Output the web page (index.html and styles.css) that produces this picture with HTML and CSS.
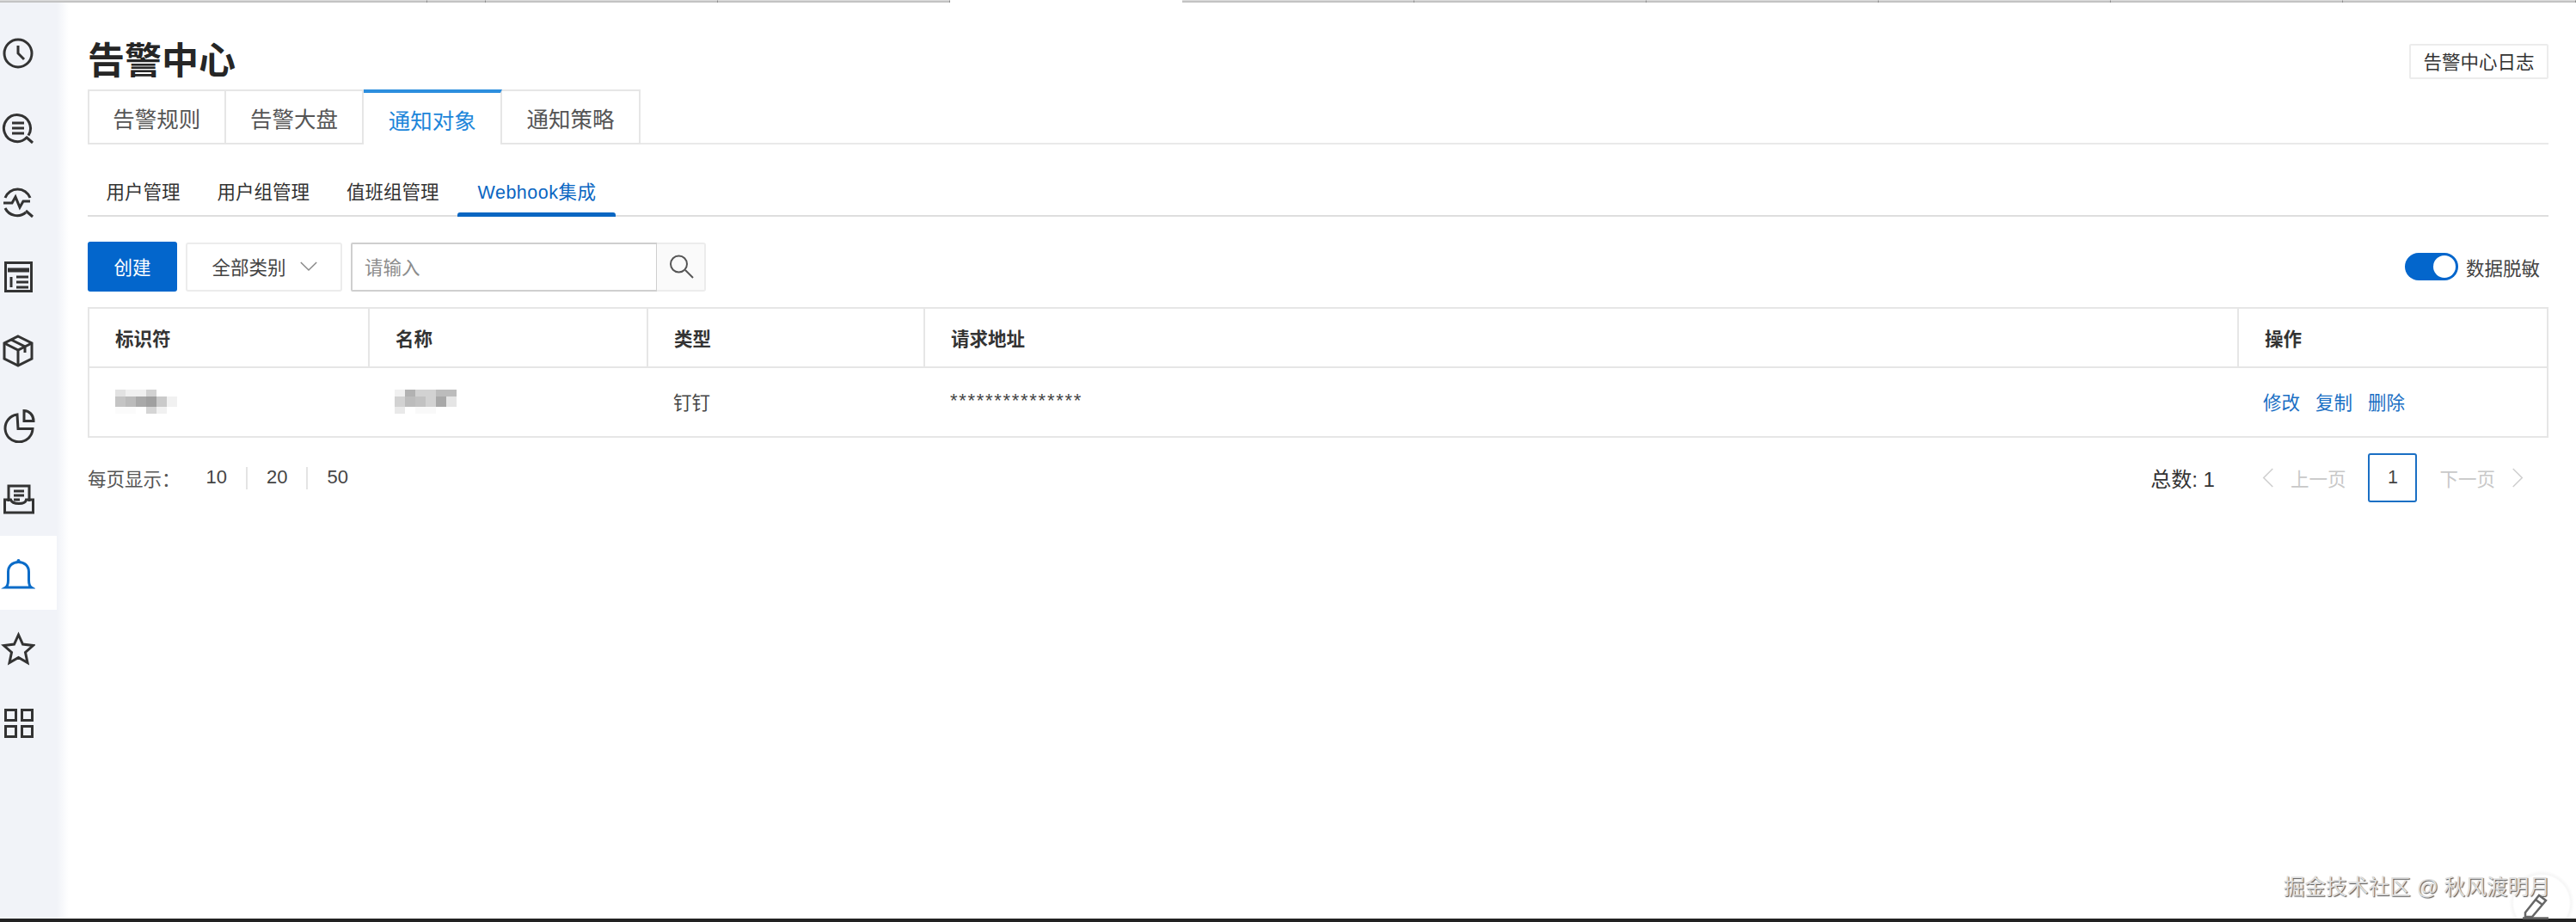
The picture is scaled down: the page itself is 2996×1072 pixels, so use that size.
FILE: index.html
```html
<!DOCTYPE html>
<html lang="zh-CN">
<head>
<meta charset="utf-8">
<title>告警中心</title>
<link rel="stylesheet" href="styles.css">
</head>
<body>
<div class="page">
  <div class="browser-strip">
    <i></i><i></i><i></i><i></i><i class="gap"></i><i></i><i></i><i></i><i></i><i></i><i></i>
  </div>
  <div class="shell">
    <nav class="rail">
      <a class="rail-item">
        <svg viewBox="0 0 40 40" class="rail-icon"><circle cx="20" cy="20" r="16"/><path d="M20 11v9l7 7"/></svg>
      </a>
      <a class="rail-item">
        <svg viewBox="0 0 40 40" class="rail-icon"><path d="M30 31A15.500 15.500 0 1 1 32 28.500"/><path d="M13 14h14M13 20h14M13 26h14"/><path d="M29 30l8 7"/></svg>
      </a>
      <a class="rail-item">
        <svg viewBox="0 0 40 40" class="rail-icon"><path d="M5 15A15.500 15.500 0 0 1 34 15"/><path d="M5 27A15.500 15.500 0 0 0 29 32"/><path d="M3 21h10l4-7 5 12 4-7h8"/><path d="M29 30l8 7"/></svg>
      </a>
      <a class="rail-item">
        <svg viewBox="0 0 40 40" class="rail-icon"><rect x="5.500" y="3.500" width="30" height="33"/><path class="thick" d="M8 12h25"/><path d="M12 20v12M18 20h14M18 26h14M18 32h14"/></svg>
      </a>
      <a class="rail-item">
        <svg viewBox="0 0 40 40" class="rail-icon"><path d="M20 3l16 8v18l-16 8-16-8V11z"/><path d="M4 11l16 8 16-8M20 19v18M12 7l16 8v7"/></svg>
      </a>
      <a class="rail-item">
        <svg viewBox="0 0 40 40" class="rail-icon"><path d="M19 7A16 16 0 1 0 37 23.500H20z"/><path d="M27 2.500c6 0 11 5 11 12H27z"/></svg>
      </a>
      <a class="rail-item">
        <svg viewBox="0 0 40 40" class="rail-icon"><path d="M9 22V4h24v18"/><path d="M15 10h12M15 15h12M15 20h7"/><path d="M4.500 20v15h33V20h-8c-1 6-16 6-18 0z"/></svg>
      </a>
      <a class="rail-item is-active">
        <svg viewBox="0 0 40 40" class="rail-icon"><path d="M5.500 35c2.500-1.500 3-4.500 3-8.500V17c0-7 5-11.500 12-11.500S32.500 10 32.500 17v9.500c0 4 .5 7 3 8.500z"/><circle class="dot" cx="20.500" cy="4" r="2"/></svg>
      </a>
      <a class="rail-item">
        <svg viewBox="0 0 40 40" class="rail-icon"><path d="M20.500 4l5 11 12 1.500-9 8 2.500 12-10.500-6-10.500 6 2.500-12-9-8 12-1.500z"/></svg>
      </a>
      <a class="rail-item">
        <svg viewBox="0 0 40 40" class="rail-icon"><rect x="5.500" y="4.500" width="12" height="12"/><rect x="24.500" y="4.500" width="12" height="12"/><rect x="5.500" y="23.500" width="12" height="12"/><rect x="24.500" y="23.500" width="12" height="12"/></svg>
      </a>
    </nav>
    <main class="content">
      <header class="title-row">
        <h1 class="title">告警中心</h1>
        <button class="log-btn">告警中心日志</button>
      </header>
      <div class="tabs">
        <a class="tab">告警规则</a>
        <a class="tab">告警大盘</a>
        <a class="tab is-active">通知对象</a>
        <a class="tab">通知策略</a>
      </div>
      <div class="subtabs">
        <a class="subtab">用户管理</a>
        <a class="subtab">用户组管理</a>
        <a class="subtab">值班组管理</a>
        <a class="subtab is-active">Webhook集成</a>
      </div>
      <div class="toolbar">
        <button class="create-btn">创建</button>
        <div class="select">全部类别
          <svg viewBox="0 0 24 14" class="select-arrow"><path d="M2 2l10 10L22 2"/></svg>
        </div>
        <div class="search">
          <div class="search-input">请输入</div>
          <div class="search-btn">
            <svg viewBox="0 0 32 32" class="search-icon"><circle cx="13.500" cy="13" r="9.500"/><path d="M21 20l9 9"/></svg>
          </div>
        </div>
        <div class="mask-toggle">
          <span class="switch"><span class="knob"></span></span>
          <span>数据脱敏</span>
        </div>
      </div>
      <table class="grid">
        <colgroup>
          <col class="c1"><col class="c2"><col class="c3"><col class="c4"><col class="c5">
        </colgroup>
        <thead>
          <tr><th>标识符</th><th>名称</th><th>类型</th><th>请求地址</th><th>操作</th></tr>
        </thead>
        <tbody>
          <tr>
            <td>
              <svg class="mosaic" viewBox="0 0 72 28" shape-rendering="crispEdges">
                <rect x="0" width="12" height="8" fill="#e2e2e2"/><rect x="12" width="24" height="8" fill="#f0f0f0"/><rect x="36" width="12" height="8" fill="#d2d2d2"/>
                <rect x="0" y="8" width="12" height="12" fill="#c4c4c4"/><rect x="12" y="8" width="12" height="12" fill="#bbb"/><rect x="24" y="8" width="12" height="12" fill="#a9a9a9"/><rect x="36" y="8" width="12" height="12" fill="#a0a0a0"/><rect x="48" y="8" width="12" height="12" fill="#cacaca"/><rect x="60" y="8" width="12" height="12" fill="#f1f1f1"/>
                <rect x="0" y="20" width="24" height="8" fill="#fbfbfb"/><rect x="36" y="20" width="12" height="8" fill="#d5d5d5"/><rect x="48" y="20" width="12" height="8" fill="#f1f1f1"/>
              </svg>
            </td>
            <td>
              <svg class="mosaic" viewBox="0 0 72 28" shape-rendering="crispEdges">
                <rect x="0" width="12" height="8" fill="#f0f0f0"/><rect x="12" width="12" height="8" fill="#b2b2b2"/><rect x="24" width="24" height="8" fill="#d2d2d2"/><rect x="48" width="24" height="8" fill="#bcbcbc"/>
                <rect x="0" y="8" width="12" height="12" fill="#d2d2d2"/><rect x="12" y="8" width="12" height="12" fill="#bcbcbc"/><rect x="24" y="8" width="12" height="12" fill="#c2c2c2"/><rect x="36" y="8" width="12" height="12" fill="#d2d2d2"/><rect x="48" y="8" width="12" height="12" fill="#a8a8a8"/><rect x="60" y="8" width="12" height="12" fill="#e5e5e5"/>
                <rect x="0" y="20" width="12" height="8" fill="#e9e9e9"/><rect x="24" y="20" width="24" height="8" fill="#f9f9f9"/>
              </svg>
            </td>
            <td>钉钉</td>
            <td class="secret">***************</td>
            <td><span class="actions"><a>修改</a><a>复制</a><a>删除</a></span></td>
          </tr>
        </tbody>
      </table>
      <div class="pager">
        <div class="page-size">
          <span class="page-size-label">每页显示：</span>
          <a>10</a><a>20</a><a>50</a>
        </div>
        <div class="page-nav">
          <span class="total">总数: 1</span>
          <span class="nav-link">
            <svg viewBox="0 0 16 28" class="chev"><path d="M14 2L2 14l12 12"/></svg>
            上一页
          </span>
          <span class="page-current">1</span>
          <span class="nav-link">
            下一页
            <svg viewBox="0 0 16 28" class="chev"><path d="M2 2l12 12L2 26"/></svg>
          </span>
        </div>
      </div>
    </main>
  </div>
  <div class="bottom-bar"></div>
  <div class="edit-halo"></div>
  <div class="watermark">掘金技术社区 @ 秋风渡明月</div>
  <svg viewBox="0 0 32 32" class="edit-icon"><path d="M4 24l16-20 8 6-16 19H4z"/><path d="M16 9l8 6"/><path d="M1 30.500h30"/></svg>
</div>
</body>
</html>
```

FILE: styles.css
```css
* { box-sizing: border-box; }
html, body { margin: 0; height: 100%; background: #fff; overflow: hidden; }
body { font-family: "Liberation Sans", "Noto Sans CJK SC", sans-serif; color: #333; }
a { cursor: pointer; }
button { font: inherit; }

.page { position: relative; display: flex; flex-direction: column; height: 100vh; }

.browser-strip {
  flex: none; height: 3px; display: grid;
  grid-template-columns: 497px 68px 270px 270px 270px 270px 270px 270px 270px 270px 1fr;
}
.browser-strip i { background: #c3c3c3; border-right: 1px solid #8e8e8e; border-top: 1px solid #dcdcdc; }
.browser-strip i.gap { background: #fff; border: 0; }

.shell { flex: 1; display: flex; min-height: 0; }

.rail {
  flex: none; width: 80px; padding-top: 16px;
  background: linear-gradient(90deg, #f1f3f8 0, #f1f3f8 66px, #fff 80px);
}
.rail-item { display: flex; align-items: center; width: 66px; height: 86.500px; padding-left: 1px; }
.rail-item.is-active { margin-top: -2px; margin-bottom: 2px; padding-top: 4px; background: #fff; }
.rail-icon { width: 40px; height: 40px; fill: none; stroke: #333; stroke-width: 3; }
.rail-icon .thick { stroke-width: 5; }
.is-active .rail-icon { stroke: #0b6cc8; }
.rail-icon .dot { fill: #0b6cc8; stroke: none; }

.content { flex: 1; min-width: 0; padding: 48px 32px 0 22px; }

.title-row { display: flex; justify-content: space-between; align-items: flex-start; height: 53px; }
.title { margin: -2px 0 0; font-size: 43px; line-height: 44px; font-weight: 700; color: #262626; }
.log-btn {
  width: 162px; height: 41px; padding: 0 0 2px; background: #fff; color: #333;
  border: 2px solid #ececec; border-radius: 2px; font-size: 21.500px;
}

.tabs { display: flex; height: 64px; border-bottom: 2px solid #e9e9e9; }
.tab {
  width: 160.700px; height: 64px; display: flex; align-items: center; justify-content: center;
  border: 2px solid #e6e6e6; border-left-width: 0; font-size: 25.500px; color: #555;
}
.tab:first-child { border-left-width: 2px; }
.tab.is-active { border-top: 4px solid #2c8ede; border-bottom: 0; color: #1d86da; background: #fff; }

.subtabs { display: flex; height: 48px; margin-top: 36px; border-bottom: 2px solid #dedede; }
.subtab { height: 48px; padding: 0 21.500px; font-size: 21.500px; line-height: 40px; color: #333; }
.subtab.is-active { position: relative; padding: 0 22px 0 23.500px; color: #0a66c2; letter-spacing: .5px; }
.subtab.is-active::after {
  content: ""; position: absolute; left: 0; right: 0; bottom: 0; height: 5px;
  background: #0a66c2; border-radius: 3px 3px 0 0;
}

.toolbar { display: flex; align-items: center; height: 58px; margin-top: 29px; }
.create-btn {
  width: 104px; height: 58px; padding: 0 0 2px; border: 0; border-radius: 3px;
  background: #0366cc; color: #fff; font-size: 21.500px;
}
.select {
  display: flex; align-items: center; justify-content: center; gap: 15px;
  width: 182px; height: 57px; margin-left: 10px; padding: 0 0 2px 2px;
  border: 2px solid #ececec; border-radius: 3px; font-size: 21.500px; color: #444;
}
.select-arrow { width: 22px; height: 13px; fill: none; stroke: #888; stroke-width: 1.600; }
.search { display: flex; height: 57px; margin-left: 10px; }
.search-input {
  display: flex; align-items: center; width: 356px; padding: 0 0 2px 14px;
  border: 2px solid #cfcfcf; border-right-width: 1px; border-radius: 2px 0 0 2px;
  font-size: 21.500px; color: #8c8c8c;
}
.search-btn {
  display: flex; align-items: center; justify-content: center; width: 57px;
  background: #fafafa; border: 2px solid #ececec; border-left: 0; border-radius: 0 3px 3px 0;
}
.search-icon { width: 32px; height: 32px; fill: none; stroke: #555; stroke-width: 2; }
.mask-toggle { display: flex; align-items: center; gap: 9px; margin-left: auto; padding-right: 10px; font-size: 21.500px; color: #444; }
.switch { display: flex; justify-content: flex-end; align-items: center; width: 62px; height: 32px; padding-right: 3px; border-radius: 16px; background: #0366cc; }
.knob { width: 26px; height: 26px; border-radius: 50%; background: #fff; }

.grid { width: 100%; margin-top: 18px; border-collapse: collapse; table-layout: fixed; border: 2px solid #e6e6e6; font-size: 21.500px; }
.c1 { width: 326px; } .c2 { width: 324px; } .c3 { width: 322px; } .c4 { width: 1528px; }
.grid th { height: 69px; padding: 0 0 0 30px; text-align: left; font-weight: 700; color: #333; border: 2px solid #e6e6e6; }
.grid td { height: 81px; padding: 0 0 3px 30px; color: #444; }
.mosaic { display: block; width: 72px; height: 28px; margin-top: 2px; }
.secret { letter-spacing: 1.700px; font-size: 22px; }
.actions { display: flex; gap: 18px; margin-left: -1px; }
.actions a { color: #1a6fc4; }

.pager { display: flex; justify-content: space-between; align-items: center; height: 57px; margin-top: 18px; font-size: 21.500px; }
.page-size { display: flex; align-items: center; }
.page-size-label { width: 115.500px; color: #555; }
.page-size a { padding: 0 22px 2px; line-height: 24px; font-size: 22px; border-right: 2px solid #e4e4e4; color: #444; }
.page-size a:last-child { border-right: 0; }
.page-nav { display: flex; align-items: center; margin-right: 29px; }
.total { margin-right: 55px; font-size: 24px; color: #333; }
.nav-link { display: flex; align-items: center; gap: 19px; color: #c8c8c8; }
.chev { width: 14px; height: 25px; fill: none; stroke: #cfcfcf; stroke-width: 1.800; }
.page-current {
  display: flex; align-items: center; justify-content: center;
  width: 57px; height: 57px; margin: 0 26px;
  border: 2px solid #1a6fc4; border-radius: 3px; color: #444;
}

.bottom-bar { flex: none; height: 4px; background: #222; }

.watermark {
  position: absolute; right: 30px; top: 1016px; font-size: 24.700px; line-height: 32px; white-space: nowrap;
  color: #dedede; text-shadow: 1px 1px 1px #555;
}
.edit-halo { position: absolute; right: 0; top: 1005px; width: 85px; height: 63px; background: radial-gradient(circle at 45px 45px, #fff 0, #fff 32px, #f6f6f6 34px, #fff 38px); }
.edit-icon { position: absolute; left: 2933px; top: 1037px; width: 32px; height: 32px; fill: none; stroke: #666; stroke-width: 2.500; }
```
